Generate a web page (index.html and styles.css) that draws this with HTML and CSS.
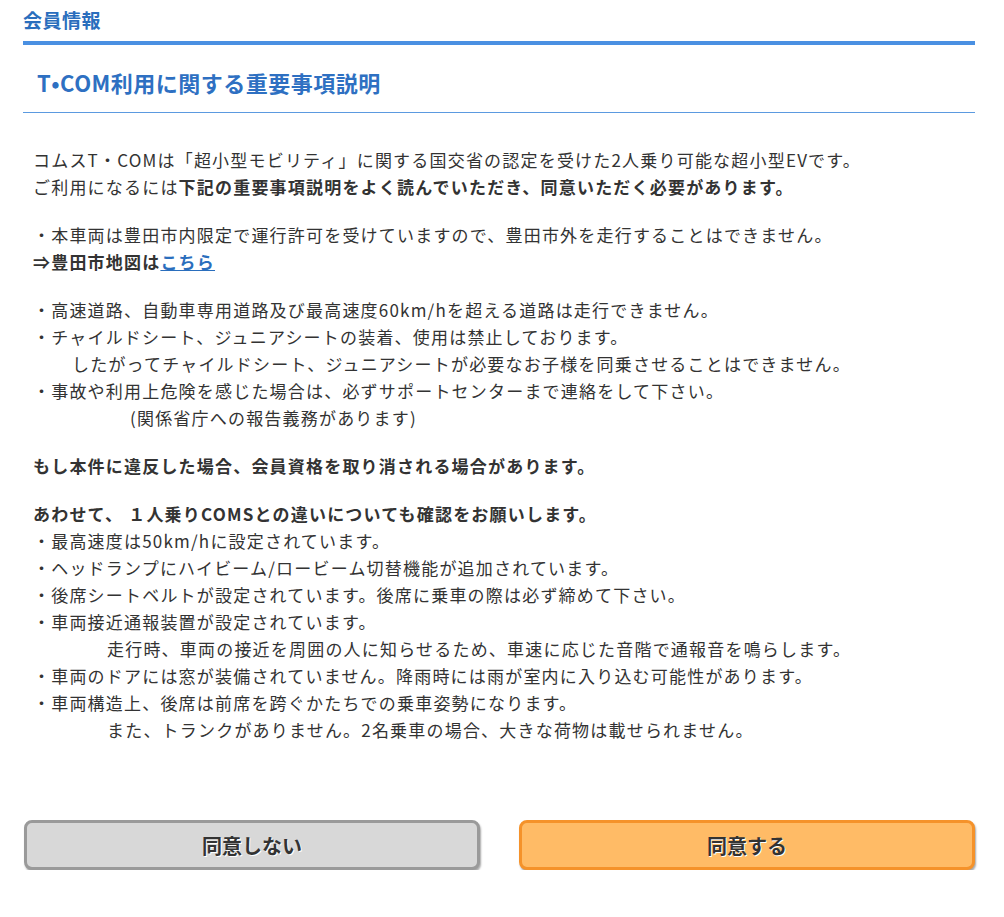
FILE: index.html
```html
<!DOCTYPE html>
<html lang="ja">
<head>
  <meta charset="UTF-8">
  <title>T・COM利用に関する重要事項説明</title>
  <link rel="stylesheet" href="styles.css">
</head>
<body>

<div class="page">
  <h2 class="section-head">会員情報</h2>

  <h1 class="title">T•COM利用に関する重要事項説明</h1>

  <div class="content">
    <p>
      コムスT・COMは「超小型モビリティ」に関する国交省の認定を受けた2人乗り可能な超小型EVです。<br>
      ご利用になるには<b>下記の重要事項説明をよく読んでいただき、同意いただく必要があります。</b>
    </p>

    <p>
      ・本車両は豊田市内限定で運行許可を受けていますので、豊田市外を走行することはできません。<br>
      <b>⇒豊田市地図は<a href="#">こちら</a></b>
    </p>

    <p>
      ・高速道路、自動車専用道路及び最高速度60km/hを超える道路は走行できません。<br>
      ・チャイルドシート、ジュニアシートの装着、使用は禁止しております。<br>
      <span class="indent-a">したがってチャイルドシート、ジュニアシートが必要なお子様を同乗させることはできません。</span><br>
      ・事故や利用上危険を感じた場合は、必ずサポートセンターまで連絡をして下さい。<br>
      <span class="indent-c">(関係省庁への報告義務があります)</span>
    </p>

    <p>
      <b>もし本件に違反した場合、会員資格を取り消される場合があります。</b>
    </p>

    <p>
      <b>あわせて、 １人乗りCOMSとの違いについても確認をお願いします。</b><br>
      ・最高速度は50km/hに設定されています。<br>
      ・ヘッドランプにハイビーム/ロービーム切替機能が追加されています。<br>
      ・後席シートベルトが設定されています。後席に乗車の際は必ず締めて下さい。<br>
      ・車両接近通報装置が設定されています。<br>
      <span class="indent-b">走行時、車両の接近を周囲の人に知らせるため、車速に応じた音階で通報音を鳴らします。</span><br>
      ・車両のドアには窓が装備されていません。降雨時には雨が室内に入り込む可能性があります。<br>
      ・車両構造上、後席は前席を跨ぐかたちでの乗車姿勢になります。<br>
      <span class="indent-b">また、トランクがありません。2名乗車の場合、大きな荷物は載せられません。</span>
    </p>
  </div>

  <div class="actions">
    <button type="button" class="btn btn-decline">同意しない</button>
    <button type="button" class="btn btn-agree">同意する</button>
  </div>
</div>

</body>
</html>
```

FILE: styles.css
```css
* {
  margin: 0;
  padding: 0;
  box-sizing: border-box;
}

body {
  font-family: "Noto Sans CJK JP", "Liberation Sans", sans-serif;
  background: #fff;
  color: #333;
}

.page {
  width: 952px;
  margin-left: 23px;
}

.section-head {
  font-size: 19px;
  font-weight: bold;
  color: #2a6ebd;
  line-height: 24px;
  letter-spacing: 0.5px;
  padding: 8px 0 9px;
  border-bottom: 4px solid #4a90e2;
}

.title {
  font-size: 22px;
  font-weight: bold;
  color: #2e70c2;
  line-height: 30px;
  letter-spacing: 0.5px;
  padding: 22px 0 15px 14px;
  border-bottom: 1px solid #5b9ae0;
}

.content {
  padding: 33px 0 0 10px;
  font-size: 17px;
  line-height: 27px;
  letter-spacing: 1.2px;
}

.content p {
  margin-bottom: 21px;
}

.content b {
  font-weight: bold;
}

.content a {
  color: #2a6ebd;
  text-decoration: underline;
}

.indent-a {
  padding-left: 39px;
}

.indent-b {
  padding-left: 74px;
}

.indent-c {
  padding-left: 97px;
}

.actions {
  display: flex;
  gap: 39px;
  margin-top: 77px;
  padding-left: 1px;
}

.btn {
  flex: 1;
  height: 50px;
  border-radius: 8px;
  font-family: "Noto Sans CJK JP", sans-serif;
  font-size: 20px;
  font-weight: bold;
  color: #333;
  text-shadow: 1px 1px 0 #fff;
  cursor: pointer;
  box-shadow: 1px 2px 2px rgba(0, 0, 0, 0.35);
}

.btn-decline {
  background: #d8d8d8;
  border: 3px solid #9a9a9a;
}

.btn-agree {
  background: #ffbb66;
  border: 3px solid #f5922a;
}
```
